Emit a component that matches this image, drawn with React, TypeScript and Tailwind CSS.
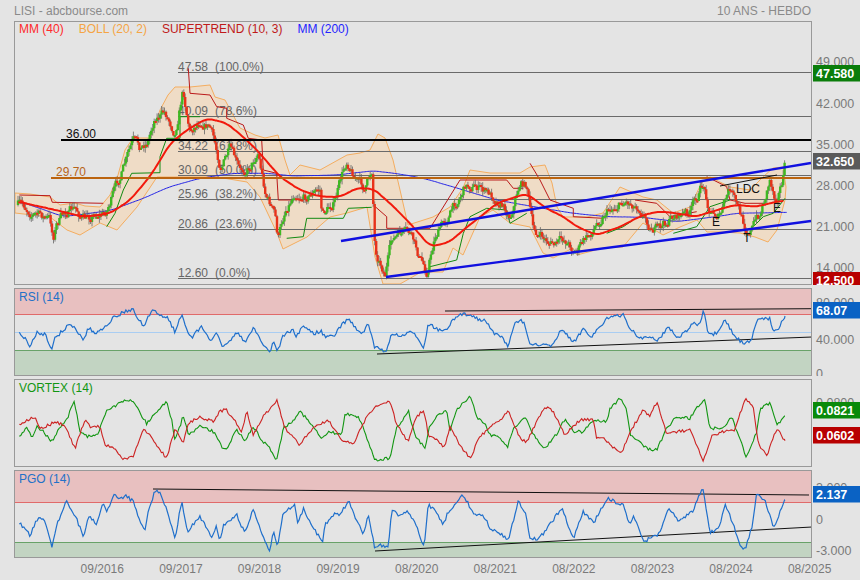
type Pt = [number, number];

// readings were taken on 3x crops, crop() brings them back to page coordinates
const crop = (ox: number, oy: number, pts: number[][]): Pt[] =>
  pts.map(([x, y]) => [ox + x / 3, oy + y / 3]);

let seed = 7;
const rnd = () => {
  seed = (seed * 16807) % 2147483647;
  return seed / 2147483647;
};

function valueAt(pts: Pt[], x: number) {
  for (let i = 1; i < pts.length; i++) {
    if (x <= pts[i][0]) {
      const [x0, y0] = pts[i - 1];
      const [x1, y1] = pts[i];
      return y0 + ((y1 - y0) * (x - x0)) / (x1 - x0 || 1);
    }
  }
  return pts[pts.length - 1][1];
}

const toPoints = (pts: Pt[]) => pts.map(([x, y]) => `${x.toFixed(1)},${y.toFixed(1)}`).join(" ");

// weekly resampling with a bit of jitter, so indicators don't look hand drawn
function jag(pts: Pt[], amp: number): Pt[] {
  const out: Pt[] = [];
  for (let x = pts[0][0]; x < pts[pts.length - 1][0]; x += 1.48) {
    out.push([x, valueAt(pts, x) + (rnd() - 0.5) * amp]);
  }
  out.push(pts[pts.length - 1]);
  return out;
}

// moving averages on the chart are round, not straight segments
function smooth(pts: Pt[], wiggle: number): Pt[] {
  const raw = jag(pts, wiggle);
  return raw.map(([x], i) => {
    const part = raw.slice(Math.max(0, i - 4), i + 5);
    return [x, part.reduce((sum, p) => sum + p[1], 0) / part.length];
  });
}

const price: Pt[] = [
  [18, 205], [30, 210], [40, 215], [50, 220], [53, 238], [56, 225], [65, 212], [75, 210], [85, 220], [95, 213],
  [105, 213], [115, 190], [125, 165], [133, 143], [140, 150], [148, 140], [155, 115], [165, 113], [175, 130], [183, 88],
  [190, 130], [200, 118], [210, 125], [220, 165], [230, 150], [240, 175], [250, 165], [258, 150], [265, 190], [275, 215],
  [278, 240], [285, 210], [295, 190], [305, 195], [320, 190], [322, 215], [335, 200], [347, 160], [355, 175], [365, 190],
  [372, 170], [375, 248], [385, 272], [392, 240], [400, 235], [410, 235], [420, 260], [427, 272], [435, 235], [445, 220],
  [455, 205], [465, 185], [475, 185], [490, 195], [500, 200], [510, 215], [520, 182], [527, 185], [533, 230], [545, 240],
  [555, 245], [565, 240], [575, 250], [590, 235], [605, 210], [625, 200], [640, 205], [650, 225], [660, 230], [675, 215],
  [690, 213], [703, 185], [710, 210], [720, 215], [730, 190], [745, 228], [750, 228], [760, 215], [770, 178], [775, 197],
  [782, 180], [786, 160],
];

type Candle = { x: number; open: number; close: number; high: number; low: number };

function buildCandles() {
  const list: Candle[] = [];
  let prev = price[0][1];
  let drift = 0;
  for (let x = 18; x < 786; x += 1.48) {
    drift = drift * 0.72 + (rnd() - 0.5) * 9;
    const close = valueAt(price, x) + drift;
    const top = Math.min(prev, close);
    const bottom = Math.max(prev, close);
    list.push({ x, open: prev, close, high: top - rnd() * 5, low: bottom + rnd() * 5 });
    prev = close;
  }
  return list;
}

const candles = buildCandles();
const wickPath = candles.map((c) => `M${c.x.toFixed(1)} ${c.high.toFixed(1)}V${c.low.toFixed(1)}`).join("");
const bodyPath = (up: boolean) =>
  candles
    .filter((c) => c.close < c.open === up)
    .map((c) => {
      const top = Math.min(c.open, c.close);
      const h = Math.max(Math.abs(c.open - c.close), 2);
      return `M${(c.x - 1.2).toFixed(1)} ${top.toFixed(1)}h2.4v${h.toFixed(1)}h-2.4z`;
    })
    .join("");

const bollinger: Pt[] = [
  [15, 193], [30, 194], [50, 197], [60, 205], [75, 203], [85, 206], [100, 207], [110, 195], [118, 175], [125, 150],
  [133, 138], [150, 138], [160, 110], [168, 95], [175, 87], [190, 87], [210, 85], [215, 97], [225, 100], [240, 128],
  [255, 135], [265, 138], [278, 135], [285, 160], [290, 175], [300, 165], [320, 170], [347, 155], [360, 153], [370, 150],
  [378, 134], [385, 138], [393, 160], [400, 190], [408, 225], [433, 217], [450, 207], [463, 188], [470, 170], [490, 173],
  [510, 173], [520, 173], [530, 167], [545, 165], [552, 183], [557, 207], [563, 217], [587, 217], [603, 213], [620, 187],
  [643, 197], [657, 200], [673, 213], [690, 207], [702, 182], [710, 177], [730, 187], [750, 190], [763, 177], [773, 168],
  [783, 167], [786, 187], [785, 200], [777, 230], [768, 242], [755, 237], [740, 233], [720, 232], [707, 232], [697, 220],
  [680, 227], [663, 235], [643, 223], [623, 247], [603, 248], [577, 255], [573, 248], [553, 258], [543, 253], [530, 227],
  [510, 223], [493, 210], [480, 217], [463, 255], [453, 248], [443, 272], [430, 272], [430, 267], [400, 284], [383, 284],
  [375, 257], [367, 207], [347, 213], [330, 217], [307, 237], [283, 249], [277, 233], [260, 197], [247, 182], [217, 177],
  [187, 177], [157, 177], [137, 207], [117, 230], [100, 223], [80, 235], [67, 230], [50, 217], [15, 213],
];

const mm40 = smooth(
  [
    ...crop(0, 0, [
      [55, 605], [120, 620], [190, 635], [250, 650], [330, 640], [390, 600], [450, 530], [510, 430], [560, 390], [620, 355],
      [680, 370], [730, 410], [780, 460], [840, 530], [900, 570], [960, 590], [1020, 590], [1070, 565], [1120, 565],
      [1180, 620], [1240, 680], [1290, 740],
    ]),
    ...crop(430, 0, [
      [60, 725], [100, 690], [150, 650], [200, 610], [290, 580], [340, 620], [400, 650], [440, 680], [500, 705], [570, 680],
      [630, 650], [680, 635], [740, 640], [800, 650], [860, 630], [920, 615], [980, 620], [1060, 600],
    ]),
  ],
  1.5,
);

const mm200 = smooth(
  [
    ...crop(0, 0, [
      [60, 605], [120, 625], [190, 650], [330, 632], [430, 595], [510, 560], [600, 535], [700, 520], [800, 520], [880, 528],
      [1010, 525], [1120, 512], [1220, 525], [1290, 540],
    ]),
    ...crop(430, 0, [
      [100, 570], [200, 600], [340, 625], [430, 640], [530, 650], [640, 652], [740, 665], [860, 650], [920, 640], [1070, 637],
    ]),
  ],
  0.5,
);

const trendRed: Pt[][] = [
  crop(0, 0, [[58, 585], [150, 587], [157, 607], [310, 610]]),
  crop(0, 0, [[565, 205], [570, 280], [630, 285], [650, 320], [680, 325], [680, 355], [730, 375], [745, 415], [785, 420], [790, 510], [830, 520], [835, 600], [880, 600]]),
  crop(0, 0, [[1120, 615], [1160, 650], [1160, 685], [1290, 685]]),
  crop(430, 0, [[0, 685], [90, 540], [230, 540], [250, 565], [280, 565]]),
  crop(430, 0, [[300, 490], [330, 540], [360, 600], [430, 625], [430, 650], [520, 655]]),
  crop(430, 0, [[615, 600], [680, 610], [720, 650], [800, 635]]),
  crop(430, 0, [[830, 530], [890, 560], [900, 600], [945, 610], [1000, 610]]),
];

const trendGreen: Pt[][] = [
  crop(0, 0, [[320, 680], [345, 640], [370, 570], [395, 520], [480, 518], [480, 470], [500, 415], [540, 415], [540, 350], [600, 350]]),
  crop(0, 0, [[860, 715], [910, 710], [920, 655], [1030, 655], [1045, 625], [1115, 622]]),
  crop(430, 0, [[0, 800], [80, 780], [100, 700], [120, 650], [170, 625], [230, 630], [240, 670], [290, 640]]),
  crop(430, 0, [[530, 700], [580, 680], [610, 660]]),
  crop(430, 0, [[730, 700], [800, 680], [840, 620], [900, 600]]),
  crop(430, 0, [[970, 680], [1000, 650], [1030, 640], [1065, 595]]),
];

const fib = [
  { y: 72.5, value: "47.58", pct: "(100.0%)" },
  { y: 116.5, value: "40.09", pct: "(78.6%)" },
  { y: 151.5, value: "34.22", pct: "(61.8%)" },
  { y: 175.5, value: "30.09", pct: "(50.0%)" },
  { y: 199.5, value: "25.96", pct: "(38.2%)" },
  { y: 229.5, value: "20.86", pct: "(23.6%)" },
  { y: 278.5, value: "12.60", pct: "(0.0%)" },
];

const rsi = jag(
  [
    ...crop(0, 285, [
      [58, 145], [75, 160], [90, 187], [100, 165], [112, 140], [125, 148], [135, 145], [155, 192], [165, 160], [185, 140],
      [205, 120], [225, 128], [250, 165], [265, 130], [290, 145], [320, 118], [345, 95], [370, 82], [398, 72], [415, 105],
      [435, 125], [445, 95], [462, 75], [480, 90], [505, 100], [525, 142], [545, 87], [572, 160], [605, 125], [635, 170],
      [650, 145], [665, 180], [680, 180], [710, 140], [735, 175], [760, 125], [790, 180], [810, 202], [820, 165], [832, 200],
      [850, 150], [880, 135], [890, 155], [910, 122], [940, 145], [965, 140], [975, 155], [1000, 155], [1025, 120], [1045, 100],
      [1085, 150], [1105, 115], [1125, 195], [1130, 185], [1160, 200], [1175, 145], [1200, 155], [1240, 140], [1272, 187], [1285, 115],
    ]),
    ...crop(430, 285, [
      [15, 130], [30, 135], [45, 140], [70, 105], [95, 88], [120, 88], [150, 105], [165, 100], [190, 145], [215, 155],
      [235, 183], [255, 115], [270, 105], [285, 120], [300, 175], [330, 183], [370, 180], [395, 130], [430, 175], [460, 130],
      [485, 155], [530, 100], [580, 90], [600, 130], [630, 160], [660, 155], [680, 170], [715, 125], [745, 160], [790, 115],
      [810, 120], [820, 75], [835, 150], [865, 145], [885, 105], [915, 155], [945, 180], [965, 160], [985, 100], [1020, 100],
      [1030, 140], [1045, 130], [1065, 93],
    ]),
  ],
  3.6,
);

const vortexGreen = jag(
  [
    ...crop(0, 285, [
      [58, 455], [80, 425], [95, 460], [110, 425], [130, 440], [155, 470], [175, 435], [200, 405], [222, 348], [240, 440],
      [265, 455], [295, 445], [320, 375], [370, 350], [398, 345], [430, 400], [440, 415], [500, 348], [515, 405], [525, 470],
      [550, 392], [565, 450], [600, 425], [640, 440], [665, 485], [680, 490], [710, 435], [735, 465], [760, 425], [785, 465],
      [810, 490], [830, 525], [850, 430], [880, 405], [900, 378], [940, 425], [965, 465], [985, 440], [1025, 450], [1035, 385],
      [1075, 395], [1090, 430], [1125, 525], [1170, 520], [1190, 430], [1225, 378], [1245, 450], [1275, 490], [1290, 420],
    ]),
    ...crop(430, 285, [
      [20, 395], [50, 375], [60, 440], [80, 375], [100, 350], [122, 335], [140, 395], [165, 415], [180, 450], [210, 455],
      [232, 490], [250, 430], [285, 395], [310, 450], [345, 490], [385, 440], [405, 400], [430, 440], [460, 440], [490, 405],
      [530, 410], [540, 370], [570, 340], [590, 370], [600, 450], [650, 490], [680, 495], [710, 430], [740, 395], [780, 400],
      [800, 370], [825, 342], [840, 430], [880, 430], [905, 395], [925, 450], [950, 518], [980, 440], [990, 370], [1020, 355],
      [1040, 420], [1065, 393],
    ]),
  ],
  3,
);

const vortexRed = jag(
  [
    ...crop(0, 285, [
      [58, 420], [80, 405], [105, 395], [120, 430], [170, 410], [195, 425], [225, 490], [255, 405], [270, 425], [300, 425],
      [315, 480], [345, 490], [370, 525], [400, 515], [430, 430], [445, 445], [480, 495], [500, 520], [525, 430], [550, 475],
      [565, 415], [600, 395], [640, 410], [660, 378], [680, 375], [710, 415], [725, 445], [740, 380], [760, 450], [790, 395],
      [830, 345], [855, 430], [900, 480], [920, 450], [950, 420], [985, 405], [1025, 465], [1060, 480], [1095, 405], [1125, 365],
      [1170, 350], [1190, 420], [1225, 470], [1245, 400], [1272, 375], [1285, 450],
    ]),
    ...crop(430, 285, [
      [20, 465], [45, 488], [60, 420], [85, 475], [122, 520], [145, 460], [180, 425], [210, 405], [235, 375], [270, 460],
      [290, 470], [320, 410], [345, 365], [370, 380], [405, 450], [450, 405], [490, 405], [500, 460], [525, 460], [540, 480],
      [575, 505], [600, 440], [640, 375], [660, 395], [680, 350], [710, 445], [745, 440], [780, 435], [820, 530], [845, 455],
      [880, 440], [915, 435], [945, 340], [970, 365], [985, 475], [1010, 515], [1040, 430], [1065, 467],
    ]),
  ],
  3,
);

const pgo = jag(
  [
    ...crop(0, 285, [
      [58, 712], [90, 752], [115, 695], [135, 705], [155, 785], [170, 720], [200, 645], [215, 680], [225, 690], [250, 755],
      [265, 695], [290, 715], [310, 650], [320, 680], [340, 632], [365, 640], [375, 630], [400, 650], [420, 710], [435, 732],
      [445, 680], [465, 615], [485, 630], [505, 690], [525, 765], [545, 645], [562, 740], [600, 695], [635, 755], [650, 725],
      [660, 765], [670, 720], [710, 690], [735, 745], [760, 672], [790, 760], [810, 800], [820, 735], [832, 790], [850, 680],
      [885, 660], [892, 720], [910, 670], [940, 730], [968, 770], [975, 720], [1005, 685], [1020, 690], [1045, 648], [1090, 750],
      [1105, 685], [1125, 795], [1130, 780], [1165, 785], [1175, 675], [1200, 695], [1220, 680], [1245, 710], [1272, 785], [1285, 660],
    ]),
    ...crop(430, 285, [
      [20, 680], [40, 720], [50, 690], [75, 655], [95, 630], [115, 655], [130, 690], [160, 690], [180, 730], [210, 745],
      [235, 765], [265, 650], [285, 680], [300, 755], [325, 765], [355, 725], [395, 670], [430, 760], [460, 680], [490, 715],
      [530, 640], [580, 660], [600, 720], [610, 690], [640, 770], [690, 745], [715, 665], [745, 710], [790, 675], [800, 650],
      [818, 608], [840, 740], [865, 735], [885, 655], [910, 720], [925, 770], [945, 795], [965, 730], [980, 628], [1005, 645],
      [1030, 730], [1065, 647],
    ]),
  ],
  3.6,
);

const dates = ["09/2016", "09/2017", "09/2018", "09/2019", "08/2020", "08/2021", "08/2022", "08/2023", "08/2024", "08/2025"];

type Tick = { y: number; label: string };
type Badge = { y: number; h?: number; label: string; bg: string };

// right hand scale, y is in page coordinates like the plots
function Axis({ top, height, ticks, badges }: { top: number; height: number; ticks: Tick[]; badges: Badge[] }) {
  return (
    <svg width={48} height={height} viewBox={`812 ${top} 48 ${height}`} className="block flex-none overflow-hidden">
      {ticks.map((t) => (
        <text key={t.label} x={816} y={t.y + 4.5} fontSize={12.5} fill="#7a7a7a">
          {t.label}
        </text>
      ))}
      {badges.map((b) => (
        <g key={b.label}>
          <rect x={813} y={b.y} width={47} height={b.h ?? 16.5} fill={b.bg} />
          <text x={816} y={b.y + 13} fontSize={12.5} fontWeight={700} fill="#ffffff">
            {b.label}
          </text>
        </g>
      ))}
    </svg>
  );
}

function SubPanel({ top, title, color, children }: { top: number; title: string; color: string; children: React.ReactNode }) {
  return (
    <div className="relative h-[88px] w-[798px] flex-none border border-[#999999]">
      <svg width={796} height={86} viewBox={`15 ${top + 1} 796 86`} className="block">
        {children}
      </svg>
      <div className="absolute left-[4px] top-0 text-[12px] leading-[17px]" style={{ color }}>
        {title}
      </div>
    </div>
  );
}

function Bands({ top, upper, lower, mid }: { top: number; upper: number; lower: number; mid?: number }) {
  return (
    <>
      <rect x={15} y={top} width={796} height={upper - top} fill="#e8c0c0" />
      <rect x={15} y={lower} width={796} height={top + 88 - lower} fill="#c2d4c2" />
      <line x1={15} x2={811} y1={upper} y2={upper} stroke="#e06a6a" />
      <line x1={15} x2={811} y1={lower} y2={lower} stroke="#68a268" />
      {mid && <line x1={15} x2={811} y1={mid} y2={mid} stroke="#a9cdf2" />}
    </>
  );
}

function MainPlot() {
  return (
    <svg width={796} height={262} viewBox="15 22 796 262" className="block">
      <polygon points={toPoints(bollinger)} fill="#efdcc6" stroke="#f4ad60" strokeWidth={1} strokeLinejoin="round" />
      {fib.map((f) => (
        <g key={f.value} fill="#666666" fontSize={12}>
          <line x1={178} x2={811} y1={f.y} y2={f.y} stroke="#6a6a6a" />
          <text x={178} y={f.y - 2}>
            {f.value}
          </text>
          <text x={215} y={f.y - 2}>
            {f.pct}
          </text>
        </g>
      ))}
      <polyline points={toPoints(mm200)} fill="none" stroke="#2222e6" strokeWidth={1} />
      {trendRed.map((p, i) => (
        <polyline key={i} points={toPoints(p)} fill="none" stroke="#bb1a1a" strokeWidth={1} />
      ))}
      {trendGreen.map((p, i) => (
        <polyline key={i} points={toPoints(p)} fill="none" stroke="#128a12" strokeWidth={1} />
      ))}
      <path d={wickPath} stroke="#666666" strokeWidth={0.8} fill="none" />
      <path d={bodyPath(true)} fill="#3fb822" />
      <path d={bodyPath(false)} fill="#e8321a" />
      <polyline points={toPoints(mm40)} fill="none" stroke="#f2190c" strokeWidth={2} strokeLinejoin="round" />
      <line x1={51} x2={811} y1={178} y2={178} stroke="#bb640f" strokeWidth={2} />
      <line x1={61} x2={811} y1={140} y2={140} stroke="#000000" strokeWidth={2} />
      <text x={56} y={176} fontSize={12} fill="#b8651a">
        29.70
      </text>
      <text x={66} y={138} fontSize={12} fill="#111111">
        36.00
      </text>
      <line x1={341} y1={241} x2={811} y2={163} stroke="#1010e0" strokeWidth={2.4} />
      <line x1={386} y1={277} x2={811} y2={221} stroke="#1010e0" strokeWidth={2.4} />
      <line x1={720} y1={186} x2={777} y2={175} stroke="#111111" strokeWidth={1} />
      <g fontSize={12} fill="#111111" textAnchor="middle">
        <text x={748} y={193}>
          LDC
        </text>
        <text x={716} y={226}>
          E
        </text>
        <text x={777} y={212}>
          E
        </text>
        <text x={747} y={242}>
          T
        </text>
      </g>
    </svg>
  );
}

export default function App() {
  return (
    <div className="flex h-[580px] w-[860px] flex-col overflow-hidden bg-[#e4e4e4] font-['Liberation_Sans',Arial,sans-serif]">
      <div className="flex h-[21px] w-[811px] flex-none items-center justify-between pl-[14px] text-[12px] text-[#8a8a8a]">
        <span>LISI - abcbourse.com</span>
        <span>10 ANS - HEBDO</span>
      </div>

      <div className="flex flex-none pl-[14px]">
        <div className="relative h-[264px] w-[798px] flex-none border border-[#999999]">
          <MainPlot />
          <div className="absolute left-[4px] top-0 flex gap-[15px] text-[12px] leading-[15px]">
            <span className="text-[#ff2a2a]">MM (40)</span>
            <span className="text-[#f5a544]">BOLL (20, 2)</span>
            <span className="text-[#c01a1a]">SUPERTREND (10, 3)</span>
            <span className="text-[#2424ff]">MM (200)</span>
          </div>
        </div>
        <Axis
          top={21}
          height={264}
          ticks={[
            { y: 61, label: "49.000" },
            { y: 103, label: "42.000" },
            { y: 144, label: "35.000" },
            { y: 185, label: "28.000" },
            { y: 226, label: "21.000" },
            { y: 267, label: "14.000" },
          ]}
          badges={[
            { y: 65, label: "47.580", bg: "#0a7d0a" },
            { y: 153, label: "32.650", bg: "#5a5a5a" },
            { y: 272, label: "12.500", bg: "#b80000" },
          ]}
        />
      </div>

      <div className="mt-[3px] flex flex-none pl-[14px]">
        <SubPanel top={288} title="RSI (14)" color="#2271c8">
          <Bands top={288} upper={314.5} lower={350.5} mid={332.5} />
          <line x1={445} y1={311} x2={812} y2={308.7} stroke="#111111" />
          <line x1={377} y1={354} x2={812} y2={337} stroke="#111111" />
          <polyline points={toPoints(rsi)} fill="none" stroke="#1f6fcb" strokeWidth={1.2} />
        </SubPanel>
        <Axis
          top={288}
          height={88}
          ticks={[
            { y: 302, label: "80.000" },
            { y: 339, label: "40.000" },
            { y: 373, label: "0" },
          ]}
          badges={[{ y: 302, label: "68.07", bg: "#0a62c4" }]}
        />
      </div>

      <div className="mt-[3px] flex flex-none pl-[14px]">
        <SubPanel top={379} title="VORTEX (14)" color="#129612">
          <polyline points={toPoints(vortexGreen)} fill="none" stroke="#129612" strokeWidth={1.1} />
          <polyline points={toPoints(vortexRed)} fill="none" stroke="#cc2222" strokeWidth={1.1} />
        </SubPanel>
        <Axis
          top={379}
          height={88}
          ticks={[{ y: 402, label: "0.0800" }]}
          badges={[
            { y: 402, label: "0.0821", bg: "#0a8a0a" },
            { y: 427, label: "0.0602", bg: "#b80000" },
          ]}
        />
      </div>

      <div className="mt-[3px] flex flex-none pl-[14px]">
        <SubPanel top={470} title="PGO (14)" color="#2271c8">
          <Bands top={470} upper={502.5} lower={542.5} />
          <line x1={153} y1={489} x2={809} y2={495} stroke="#111111" />
          <line x1={375} y1={551} x2={812} y2={527} stroke="#111111" />
          <polyline points={toPoints(pgo)} fill="none" stroke="#1f6fcb" strokeWidth={1.2} />
        </SubPanel>
        <Axis
          top={470}
          height={88}
          ticks={[
            { y: 487, label: "3.000" },
            { y: 519, label: "0" },
            { y: 550, label: "-3.000" },
          ]}
          badges={[{ y: 486, label: "2.137", bg: "#0a62c4" }]}
        />
      </div>

      <div className="flex flex-1 items-center pl-[63px] text-[12px] text-[#7a7a7a]">
        {dates.map((d) => (
          <span key={d} className="w-[78.6px] flex-none text-center">
            {d}
          </span>
        ))}
      </div>
    </div>
  );
}
